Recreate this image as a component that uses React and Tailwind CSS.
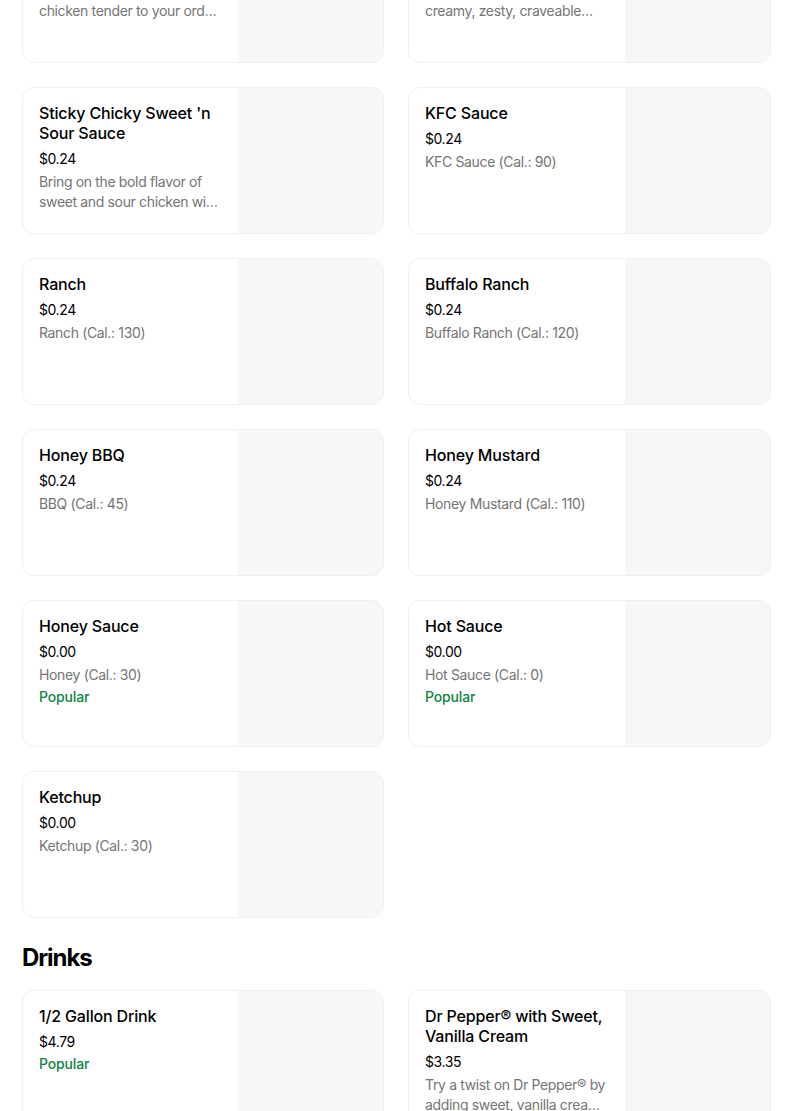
const sauces = [
  { name: 'Signature Sauce', price: '$0.24', desc: ['Add a dip for every', 'chicken tender to your order today'] },
  { name: 'Comeback Sauce', price: '$0.24', desc: ['A bold, peppery sauce that is', 'creamy, zesty, craveable…'] },
  { name: "Sticky Chicky Sweet 'n Sour Sauce", price: '$0.24', desc: ['Bring on the bold flavor of', 'sweet and sour chicken with a sauce'] },
  { name: 'KFC Sauce', price: '$0.24', desc: ['KFC Sauce (Cal.: 90)'] },
  { name: 'Ranch', price: '$0.24', desc: ['Ranch (Cal.: 130)'] },
  { name: 'Buffalo Ranch', price: '$0.24', desc: ['Buffalo Ranch (Cal.: 120)'] },
  { name: 'Honey BBQ', price: '$0.24', desc: ['BBQ (Cal.: 45)'] },
  { name: 'Honey Mustard', price: '$0.24', desc: ['Honey Mustard (Cal.: 110)'] },
  { name: 'Honey Sauce', price: '$0.00', desc: ['Honey (Cal.: 30)'], popular: true },
  { name: 'Hot Sauce', price: '$0.00', desc: ['Hot Sauce (Cal.: 0)'], popular: true },
  { name: 'Ketchup', price: '$0.00', desc: ['Ketchup (Cal.: 30)'] },
]

const drinks = [
  { name: '1/2 Gallon Drink', price: '$4.79', popular: true },
  { name: 'Dr Pepper® with Sweet, Vanilla Cream', price: '$3.35', desc: ['Try a twist on Dr Pepper® by', 'adding sweet, vanilla cream flavor'] },
]

// One menu tile: text on the left, image placeholder on the right
function ItemCard({ item }) {
  return (
    <div className="flex h-[147px] overflow-hidden rounded-xl border border-[#efefef] bg-white">
      <div className="min-w-0 flex-1 px-4 pt-[15px]">
        <div className="text-base font-medium leading-5 tracking-[-0.01em] text-black">{item.name}</div>
        <div className="mt-1.5 text-sm leading-5 tracking-[-0.03em] text-black">{item.price}</div>
        {item.desc && (
          <div className="mt-[3px] text-sm leading-5 tracking-[-0.025em] text-[#757575]">
            {item.desc.map((line, i) => (
              <div key={i} className="truncate">{line}</div>
            ))}
          </div>
        )}
        {item.popular && <div className="mt-0.5 text-sm font-medium leading-5 tracking-[-0.01em] text-[#0e8345]">Popular</div>}
      </div>
      <div className="w-[145px] shrink-0 bg-[#f7f7f7]" />
    </div>
  )
}

export default function App() {
  return (
    <div className="min-h-[1111px] overflow-hidden bg-white" style={{ fontFamily: 'Inter, "Liberation Sans", sans-serif' }}>
      <div className="-mt-[84px] pl-[22px]">
        <div className="grid grid-cols-[362px_363px] gap-6">
          {sauces.map((s) => (
            <ItemCard key={s.name} item={s} />
          ))}
        </div>
        <h2 className="mt-6 mb-4 text-2xl font-bold leading-8 tracking-[-0.045em] text-black">Drinks</h2>
        <div className="grid grid-cols-[362px_363px] gap-6">
          {drinks.map((d) => (
            <ItemCard key={d.name} item={d} />
          ))}
        </div>
      </div>
    </div>
  )
}
